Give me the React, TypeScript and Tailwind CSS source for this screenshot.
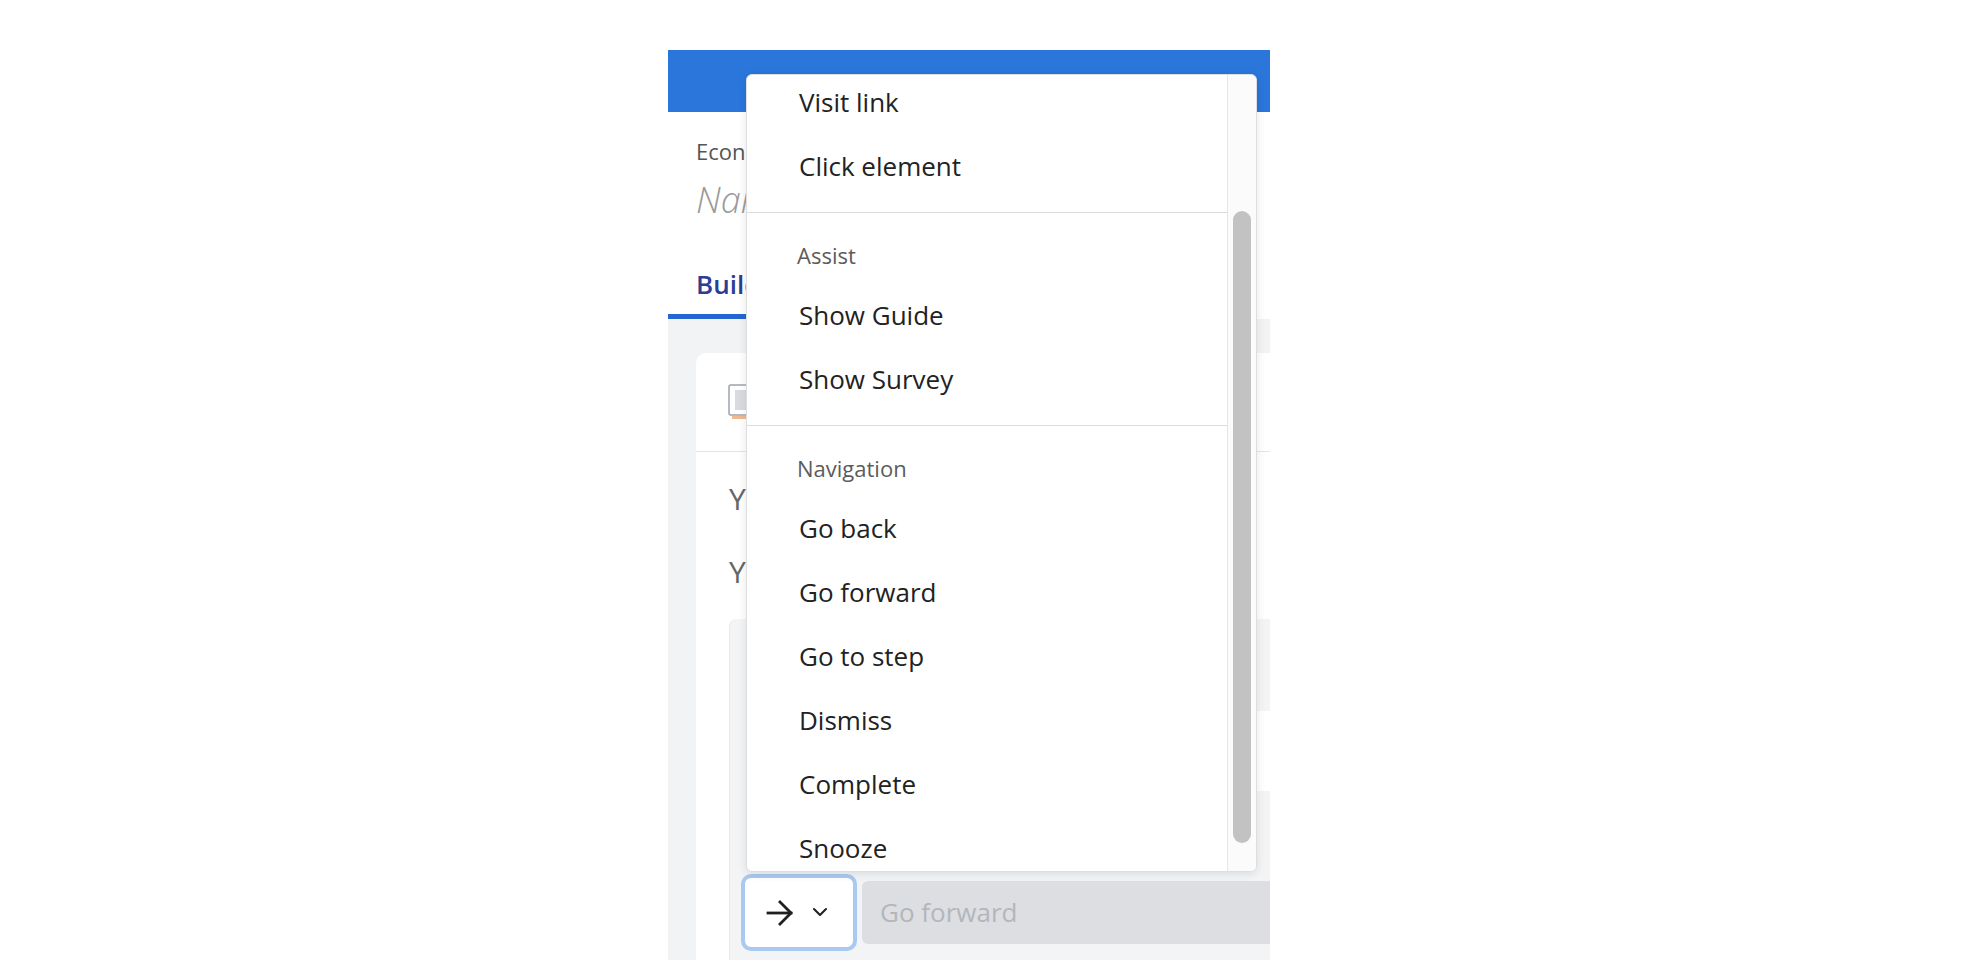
import React from 'react';

const sections = [
  { title: null, items: ['Visit link', 'Click element'] },
  { title: 'Assist', items: ['Show Guide', 'Show Survey'] },
  { title: 'Navigation', items: ['Go back', 'Go forward', 'Go to step', 'Dismiss', 'Complete', 'Snooze'] },
];

function ArrowIcon() {
  return (
    <svg width="28" height="28" viewBox="0 0 28 28" fill="none" stroke="#1f1f1f" strokeWidth="2.8" strokeLinecap="square">
      <path d="M2 14h23" />
      <path d="M14 3l11 11-11 11" />
    </svg>
  );
}

function Chevron() {
  return (
    <svg width="18" height="11" viewBox="0 0 18 11" fill="none" stroke="#1f1f1f" strokeWidth="2" strokeLinecap="round" strokeLinejoin="round">
      <path d="M3 2l6 6 6-6" />
    </svg>
  );
}

function ModalIcon() {
  return (
    <svg width="30" height="36" viewBox="0 0 30 36" fill="none">
      <rect x="1" y="1" width="28" height="30" rx="2" stroke="#9ca3af" strokeWidth="1.5" fill="#fff" />
      <rect x="7" y="6" width="20" height="20" fill="#d9dbe0" />
      <rect x="4" y="32" width="22" height="3" fill="#f2b88f" />
    </svg>
  );
}

function ActionMenu() {
  return (
    <div className="absolute left-[78px] top-[24px] w-[511px] h-[798px] bg-white rounded-[6px] border border-[#dedede] shadow-[0_2px_10px_rgba(0,0,0,0.10)] overflow-hidden flex">
      <div className="w-[480px] overflow-hidden">
        <div className="-mt-[5px]">
          {sections.map((s, i) => (
            <div key={i} className={`${s.title ? 'pt-[14px]' : ''} pb-[14px] ${i < sections.length - 1 ? 'border-b border-[#dcdcdc]' : ''}`}>
              {s.title && (
                <div className="h-[56px] flex items-center pl-[50px] text-[22px] text-[#5c5c5c]">{s.title}</div>
              )}
              {s.items.map((it) => (
                <div key={it} className="h-[64px] flex items-center pl-[52px] text-[26px] text-[#222]">{it}</div>
              ))}
            </div>
          ))}
        </div>
      </div>
      <div className="flex-1 border-l border-[#e6e6e6] bg-[#fbfbfb] pt-[136px] px-[5px]">
        <div className="h-[632px] rounded-full bg-[#c2c2c2]" />
      </div>
    </div>
  );
}

export default function App() {
  return (
    <div className="min-h-screen bg-white pl-[668px] pt-[50px] font-['Open_Sans','Noto_Sans',sans-serif]">
      <div className="relative w-[602px] h-[910px] overflow-hidden flex flex-col">
        {/* Top bar */}
        <div className="h-[62px] bg-[#2a76db] shrink-0" />

        {/* Title area */}
        <div className="bg-white px-[28px] pt-[24px] shrink-0">
          <p className="text-[22px] leading-[30px] text-[#555]">Economy</p>
          <p className="mt-[12px] text-[36px] leading-[44px] italic font-light text-[#9a9a9a]">Name your guide</p>
          <div className="mt-[45px] flex gap-8">
            <div className="pb-[13px] border-b-[5px] border-[#2566d1] -ml-[28px] pl-[28px] pr-[20px]">
              <span className="text-[26px] leading-[34px] font-semibold text-[#2c3d95]">Build</span>
            </div>
            <div className="pb-[13px]">
              <span className="text-[26px] leading-[34px] text-[#555]">Settings</span>
            </div>
          </div>
        </div>

        {/* Body */}
        <div className="flex-1 bg-[#f2f3f5] pl-[28px] pt-[34px] flex flex-col">
          <div className="flex-1 bg-white rounded-tl-[10px] flex flex-col">
            <div className="h-[99px] border-b border-[#e4e4e7] pl-[32px] pt-[31px] shrink-0">
              <ModalIcon />
            </div>
            <div className="pl-[33px] pt-[27px] flex-1 flex flex-col">
              <p className="text-[30px] leading-[40px] text-[#666]">Your step content</p>
              <p className="mt-[33px] text-[30px] leading-[40px] text-[#666]">Your button action</p>
              <div className="mt-[27px] flex-1 bg-[#f3f4f6] rounded-tl-[8px] border-l border-[#e8e9ec] flex flex-col">
                <div className="h-[92px]" />
                <div className="h-[80px] ml-[30px] bg-white" />
                <div className="h-[83px]" />
                <div className="flex items-center pl-[11px]">
                  <button className="w-[116px] h-[77px] rounded-[10px] border-[4px] border-[#a9c9f1] bg-white flex items-center pl-[21px] gap-[17px]">
                    <ArrowIcon />
                    <Chevron />
                  </button>
                  <div className="ml-[5px] flex-1 h-[63px] bg-[#dcdee2] rounded-l-[6px] flex items-center pl-[18px] text-[26px] text-[#b3b6bb]">
                    Go forward
                  </div>
                </div>
              </div>
            </div>
          </div>
        </div>

        <ActionMenu />
      </div>
    </div>
  );
}
